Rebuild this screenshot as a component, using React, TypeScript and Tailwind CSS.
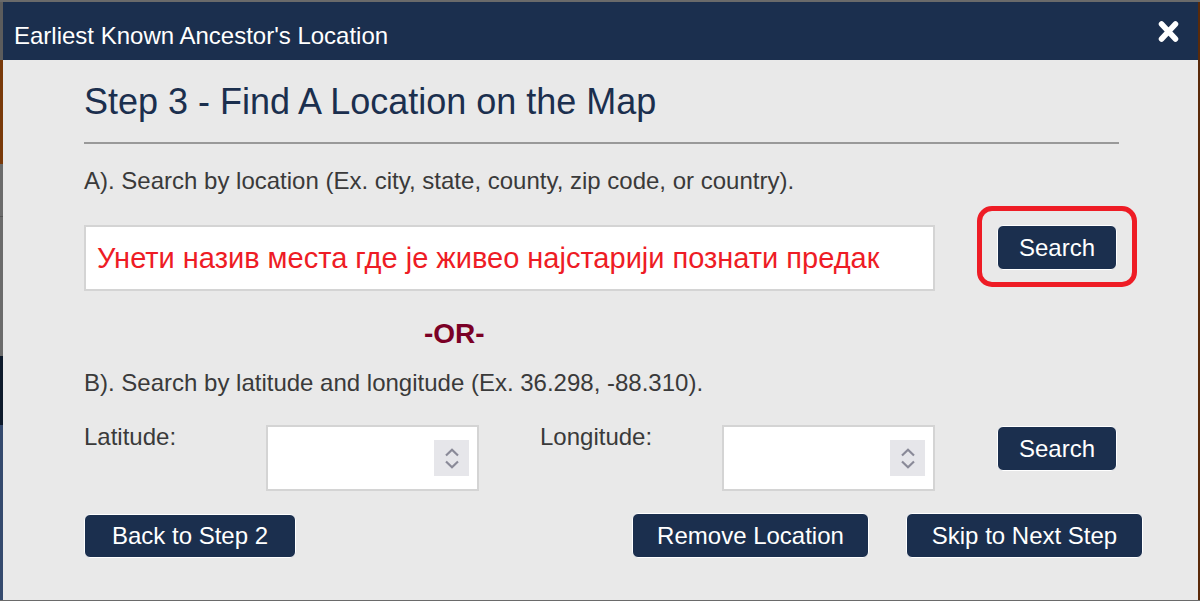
import React from "react";

const F = { fontFamily: '"Liberation Sans", Arial, "Noto Sans", sans-serif' };

function Btn({ children, w, h = 45 }: { children: React.ReactNode; w: number; h?: number }) {
  return (
    <button
      className="flex items-center justify-center rounded-[6px] border border-white bg-[#1b2f4e] text-[24px] leading-[28px] text-white"
      style={{ width: w, height: h }}
    >
      {children}
    </button>
  );
}

function Spinner() {
  return (
    <div className="flex h-[36px] w-[35px] flex-col items-center justify-center gap-[3px] bg-[#e6e6ea]">
      <svg width="16" height="9" viewBox="0 0 16 9">
        <path d="M2 7.5 L8 1.8 L14 7.5" fill="none" stroke="#8a8a98" strokeWidth="2.2" />
      </svg>
      <svg width="16" height="9" viewBox="0 0 16 9">
        <path d="M2 1.5 L8 7.2 L14 1.5" fill="none" stroke="#8a8a98" strokeWidth="2.2" />
      </svg>
    </div>
  );
}

function NumInput() {
  return (
    <div className="flex h-[66px] w-[213px] items-center justify-end border-2 border-[#d4d4d4] bg-white pr-[8px]">
      <Spinner />
    </div>
  );
}

export default function App() {
  return (
    <div className="flex h-[601px] w-[1200px] flex-col overflow-hidden bg-[#5e5e5e]" style={F}>
      <div className="h-[2px] bg-[#6a6a6a]" />
      <div className="flex flex-1">
        <div className="flex w-[3px] flex-col">
          <div className="h-[58px] bg-[#5c5c5c]" />
          <div className="h-[104px] bg-[#7a3a0a]" />
          <div className="h-[52px] bg-[#6b6b6b]" />
          <div className="h-[1px] bg-[#555555]" />
          <div className="h-[139px] bg-[#6b6b6b]" />
          <div className="h-[69px] bg-[#0e1a2b]" />
          <div className="flex-1 bg-[#354a6e]" />
        </div>
        <div className="flex flex-1 flex-col bg-[#e9e9e9]">
          <div className="flex h-[58px] items-center justify-between bg-[#1b2f4e] pl-[11px] pr-[19px]">
            <span className="mt-[10px] text-[24px] leading-[28px] text-white">Earliest Known Ancestor's Location</span>
            <svg width="21" height="23" viewBox="0 0 21 23">
              <path d="M3.5 4 L17.5 19 M17.5 4 L3.5 19" stroke="#ffffff" strokeWidth="5.5" strokeLinecap="round" />
            </svg>
          </div>
          <div className="flex flex-col pl-[81px]">
            <h1 className="mt-[22px] text-[36px] leading-[40px] text-[#1b2f4e]">Step 3 - Find A Location on the Map</h1>
            <div className="mt-[20px] h-[2px] w-[1035px] bg-[#999999]" />
            <p className="mt-[23px] text-[24px] leading-[28px] text-[#3a3a3a]">
              A). Search by location (Ex. city, state, county, zip code, or country).
            </p>
            <div className="mt-[30px] flex items-start">
              <div className="flex h-[66px] w-[851px] items-center border-2 border-[#d4d4d4] bg-white pl-[11px]">
                <span className="text-[29px] leading-[32px] text-[#ee1c25]">
                  Унети назив места где је живео најстарији познати предак
                </span>
              </div>
              <div className="relative ml-[62px]">
                <Btn w={120}>Search</Btn>
                <div className="pointer-events-none absolute left-[-20px] top-[-19px] h-[81px] w-[160px] rounded-[15px] border-[5px] border-[#ee1c25]" />
              </div>
            </div>
            <div className="ml-[340px] mt-[27px] text-[28px] font-bold leading-[32px] text-[#7b0026]">-OR-</div>
            <p className="mt-[19px] text-[24px] leading-[28px] text-[#3a3a3a]">
              B). Search by latitude and longitude (Ex. 36.298, -88.310).
            </p>
            <div className="mt-[28px] flex items-start">
              <span className="-mt-[2px] w-[182px] text-[24px] leading-[28px] text-[#3a3a3a]">Latitude:</span>
              <NumInput />
              <span className="-mt-[2px] ml-[61px] w-[182px] text-[24px] leading-[28px] text-[#3a3a3a]">Longitude:</span>
              <NumInput />
              <div className="ml-[62px] mt-[1px]">
                <Btn w={120}>Search</Btn>
              </div>
            </div>
            <div className="mt-[22px] flex items-start">
              <div className="mt-[1px]">
                <Btn w={212} h={44}>Back to Step 2</Btn>
              </div>
              <div className="ml-[336px]">
                <Btn w={237}>Remove Location</Btn>
              </div>
              <div className="ml-[37px]">
                <Btn w={237}>Skip to Next Step</Btn>
              </div>
            </div>
          </div>
        </div>
        <div className="w-[2px] bg-[#5a2a0a]" />
      </div>
      <div className="h-[1px] bg-[#6a6a6a]" />
    </div>
  );
}
